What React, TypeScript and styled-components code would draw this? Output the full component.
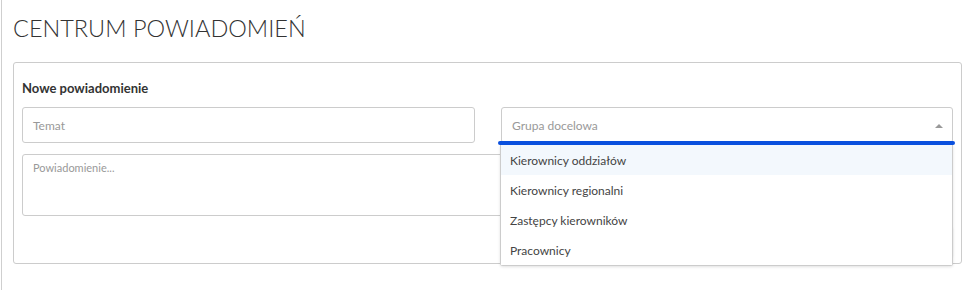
import React from 'react'
import styled, { createGlobalStyle } from 'styled-components'

const GlobalStyle = createGlobalStyle`
body {
  margin: 0;
  font-family: Lato, "Open Sans", sans-serif;
  background: #fff;
}
`;

const Page = styled.div`
margin-left: 1px;
border-left: 1px solid #cfcfcf;
min-height: 290px;
box-sizing: border-box;
padding: 13px 12px 0 11px;
`;

const Title = styled.h1`
margin: 0 0 19px;
font-size: 23.5px;
line-height: 30px;
font-weight: 300;
color: #333;
`;

const Card = styled.div`
width: 949px;
box-sizing: border-box;
border: 1px solid #cccccc;
border-radius: 3px;
padding: 16px 8px 6px 8px;
`;

const CardTitle = styled.div`
font-size: 13px;
font-weight: 700;
color: #333;
line-height: 18px;
margin-bottom: 10px;
`;

const Row = styled.div`
display: grid;
grid-template-columns: 453px 452px;
column-gap: 26px;
margin-bottom: 11px;
`;

const Input = styled.div`
height: 36px;
box-sizing: border-box;
border: 1px solid #cccccc;
border-radius: 3px;
padding: 0 10px;
display: flex;
align-items: center;
font-size: 12px;
color: #999;
`;

const SelectWrap = styled.div`
position: relative;
`;

const Select = styled(Input)`
justify-content: space-between;
padding-right: 9px;
`;

const Caret = styled.span`
width: 0;
height: 0;
border-left: 4px solid transparent;
border-right: 4px solid transparent;
border-bottom: 4px solid #999;
margin-top: 1px;
`;

const FocusBar = styled.div`
position: absolute;
left: -3px;
right: -2px;
top: 34px;
height: 4px;
border-radius: 2px;
background: #0a50de;
z-index: 3;
`;

const Menu = styled.ul`
position: absolute;
left: -1px;
right: 0;
top: 38px;
margin: 0;
padding: 0;
list-style: none;
background: #fff;
border: 1px solid #cccccc;
border-top: none;
border-radius: 0 0 3px 3px;
box-shadow: 0 1px 3px rgba(0,0,0,0.12);
z-index: 2;
`;

type OptionProps = {
  active?: boolean;
}

const Option = styled.li<OptionProps>`
height: 30px;
display: flex;
align-items: center;
padding: 0 9px;
font-size: 12px;
color: #444;
background: ${({ active }) => active ? '#f3f8fd' : '#fff'};
`;

const TextArea = styled.div`
height: 62px;
box-sizing: border-box;
border: 1px solid #cccccc;
border-radius: 3px;
padding: 6px 10px;
font-size: 11px;
color: #999;
margin-bottom: 10px;
`;

const Footer = styled.div`
display: flex;
justify-content: flex-end;
`;

const Button = styled.button`
height: 31px;
padding: 0 18px;
border: 1px solid #dddddd;
border-radius: 3px;
background: #fff;
box-shadow: 0 1px 2px rgba(0,0,0,0.1);
font-family: inherit;
font-size: 12px;
color: #555;
`;

const options = [
  'Kierownicy oddziałów',
  'Kierownicy regionalni',
  'Zastępcy kierowników',
  'Pracownicy',
];

export default () => {
  return (
    <>
      <GlobalStyle />
      <Page>
        <Title>CENTRUM POWIADOMIEŃ</Title>
        <Card>
          <CardTitle>Nowe powiadomienie</CardTitle>
          <Row>
            <Input>Temat</Input>
            <SelectWrap>
              <Select>
                Grupa docelowa
                <Caret />
              </Select>
              <FocusBar />
              <Menu>
                {options.map((o, i) => (
                  <Option key={o} active={i === 0}>{o}</Option>
                ))}
              </Menu>
            </SelectWrap>
          </Row>
          <TextArea>Powiadomienie...</TextArea>
          <Footer>
            <Button>Wyślij</Button>
          </Footer>
        </Card>
      </Page>
    </>
  )
}
